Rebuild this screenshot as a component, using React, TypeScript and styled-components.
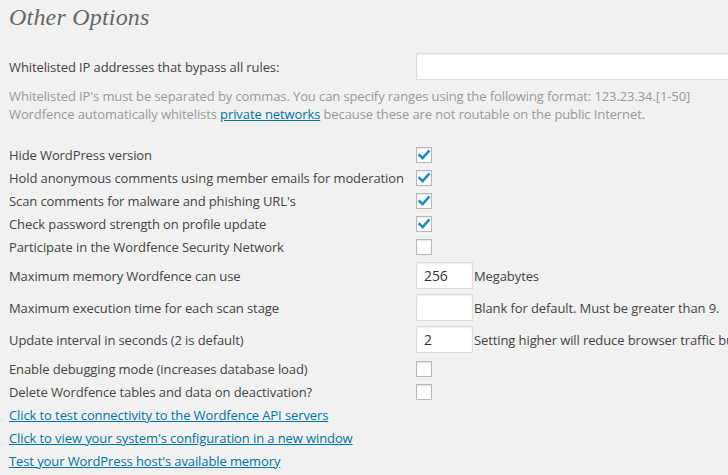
import styled, { createGlobalStyle } from "styled-components";

const Global = createGlobalStyle`
    html, body {
        margin: 0;
        padding: 0;
        background: #f1f1f1;
        overflow: hidden;
    }
    body {
        font-family: "Open Sans", "Liberation Sans", sans-serif;
        font-size: 13px;
        letter-spacing: -0.1px;
        color: #444;
    }
`;

type Check = { label: string; marcado: boolean };
type Campo = { label: string; valor: string; sufixo: string };

const checksTopo: Check[] = [
    { label: 'Hide WordPress version', marcado: true },
    { label: 'Hold anonymous comments using member emails for moderation', marcado: true },
    { label: "Scan comments for malware and phishing URL's", marcado: true },
    { label: 'Check password strength on profile update', marcado: true },
    { label: 'Participate in the Wordfence Security Network', marcado: false },
];

const campos: Campo[] = [
    { label: 'Maximum memory Wordfence can use', valor: '256', sufixo: 'Megabytes' },
    { label: 'Maximum execution time for each scan stage', valor: '', sufixo: 'Blank for default. Must be greater than 9.' },
    { label: 'Update interval in seconds (2 is default)', valor: '2', sufixo: 'Setting higher will reduce browser traffic but slow scan starts, live traffic & status updates.' },
];

const checksFim: Check[] = [
    { label: 'Enable debugging mode (increases database load)', marcado: false },
    { label: 'Delete Wordfence tables and data on deactivation?', marcado: false },
];

const links = [
    'Click to test connectivity to the Wordfence API servers',
    "Click to view your system's configuration in a new window",
    "Test your WordPress host's available memory",
];

function Checkbox({ marcado }: { marcado: boolean }) {
    return (
        <CheckStl>
            {marcado && (
                <svg width="14" height="14" viewBox="0 0 14 14">
                    <path d="M2.6 7.2 L5.6 10.2 L11.6 3.4" fill="none" stroke="#1e8cbe" strokeWidth="2.6" strokeLinecap="square" />
                </svg>
            )}
        </CheckStl>
    );
}

function ListaChecks({ itens }: { itens: Check[] }) {
    return (
        <ListaStl>
            {itens.map((op) => (
                <LinhaStl key={op.label} $alta={false}>
                    <LabelStl>{op.label}</LabelStl>
                    <Checkbox marcado={op.marcado} />
                </LinhaStl>
            ))}
        </ListaStl>
    );
}

export default function App() {
    return (
        <PaginaStl>
            <Global />
            <TituloStl>Other Options</TituloStl>

            <WhitelistStl>
                <LabelStl>Whitelisted IP addresses that bypass all rules:</LabelStl>
                <CampoLargoStl />
            </WhitelistStl>
            <AjudaStl>
                Whitelisted IP's must be separated by commas. You can specify ranges using the following format: 123.23.34.[1-50]
                <br />
                Wordfence automatically whitelists <LinkStl href="#">private networks</LinkStl> because these are not routable on the public Internet.
            </AjudaStl>

            <OpcoesStl>
                <ListaChecks itens={checksTopo} />
                <CamposStl>
                    {campos.map((op) => (
                        <LinhaStl key={op.label} $alta>
                            <LabelStl>{op.label}</LabelStl>
                            <ValorStl>
                                <CampoStl>{op.valor}</CampoStl>
                                <SufixoStl>{op.sufixo}</SufixoStl>
                            </ValorStl>
                        </LinhaStl>
                    ))}
                </CamposStl>
                <ListaChecks itens={checksFim} />
            </OpcoesStl>

            <LinksStl>
                {links.map((l) => (
                    <LinkStl key={l} href="#">{l}</LinkStl>
                ))}
            </LinksStl>
        </PaginaStl>
    );
}

const PaginaStl = styled.div`
    padding: 0 0 0 9px;
    width: 760px;
`;

const TituloStl = styled.h2`
    margin: 0;
    padding-top: 3px;
    font-family: "Liberation Serif", "DejaVu Serif", serif;
    font-style: italic;
    font-weight: normal;
    font-size: 24px;
    line-height: 29px;
    letter-spacing: 0.2px;
    color: #666;
`;

const WhitelistStl = styled.div`
    display: grid;
    grid-template-columns: 407px 1fr;
    align-items: center;
    margin-top: 21px;
`;

const LabelStl = styled.span`
    color: #444;
    white-space: nowrap;
    line-height: 18px;
`;

const CampoLargoStl = styled.div`
    width: 340px;
    height: 25px;
    background: #fff;
    border: 1px solid #ddd;
    box-shadow: inset 0 1px 2px rgba(0, 0, 0, 0.07);
`;

const AjudaStl = styled.p`
    margin: 7px 0 0;
    color: #999;
    line-height: 18px;
    white-space: nowrap;
`;

const LinkStl = styled.a`
    color: #0074a2;
    text-decoration: underline;
`;

const OpcoesStl = styled.div`
    margin-top: 20px;
`;

const ListaStl = styled.div`
    display: flex;
    flex-direction: column;
`;

const CamposStl = styled.div`
    display: flex;
    flex-direction: column;
    padding: 1.5px 0;
`;

const LinhaStl = styled.div<{ $alta: boolean }>`
    display: grid;
    grid-template-columns: 407px 1fr;
    align-items: center;
    height: ${(p) => (p.$alta ? '32px' : '23px')};
`;

const CheckStl = styled.span`
    display: flex;
    align-items: center;
    justify-content: center;
    width: 14px;
    height: 14px;
    background: #fff;
    border: 1px solid #b4b9be;
    box-shadow: inset 0 1px 2px rgba(0, 0, 0, 0.1);
`;

const ValorStl = styled.div`
    display: flex;
    align-items: center;
    white-space: nowrap;
`;

const CampoStl = styled.div`
    box-sizing: border-box;
    width: 57px;
    height: 27px;
    padding: 0 7px;
    background: #fff;
    border: 1px solid #ddd;
    box-shadow: inset 0 1px 2px rgba(0, 0, 0, 0.07);
    color: #333;
    font-size: 14px;
    line-height: 25px;
`;

const SufixoStl = styled.span`
    margin-left: 1px;
    color: #444;
`;

const LinksStl = styled.div`
    display: flex;
    flex-direction: column;
    align-items: flex-start;
    gap: 5px;
    margin-top: 3px;
    line-height: 18px;
`;
